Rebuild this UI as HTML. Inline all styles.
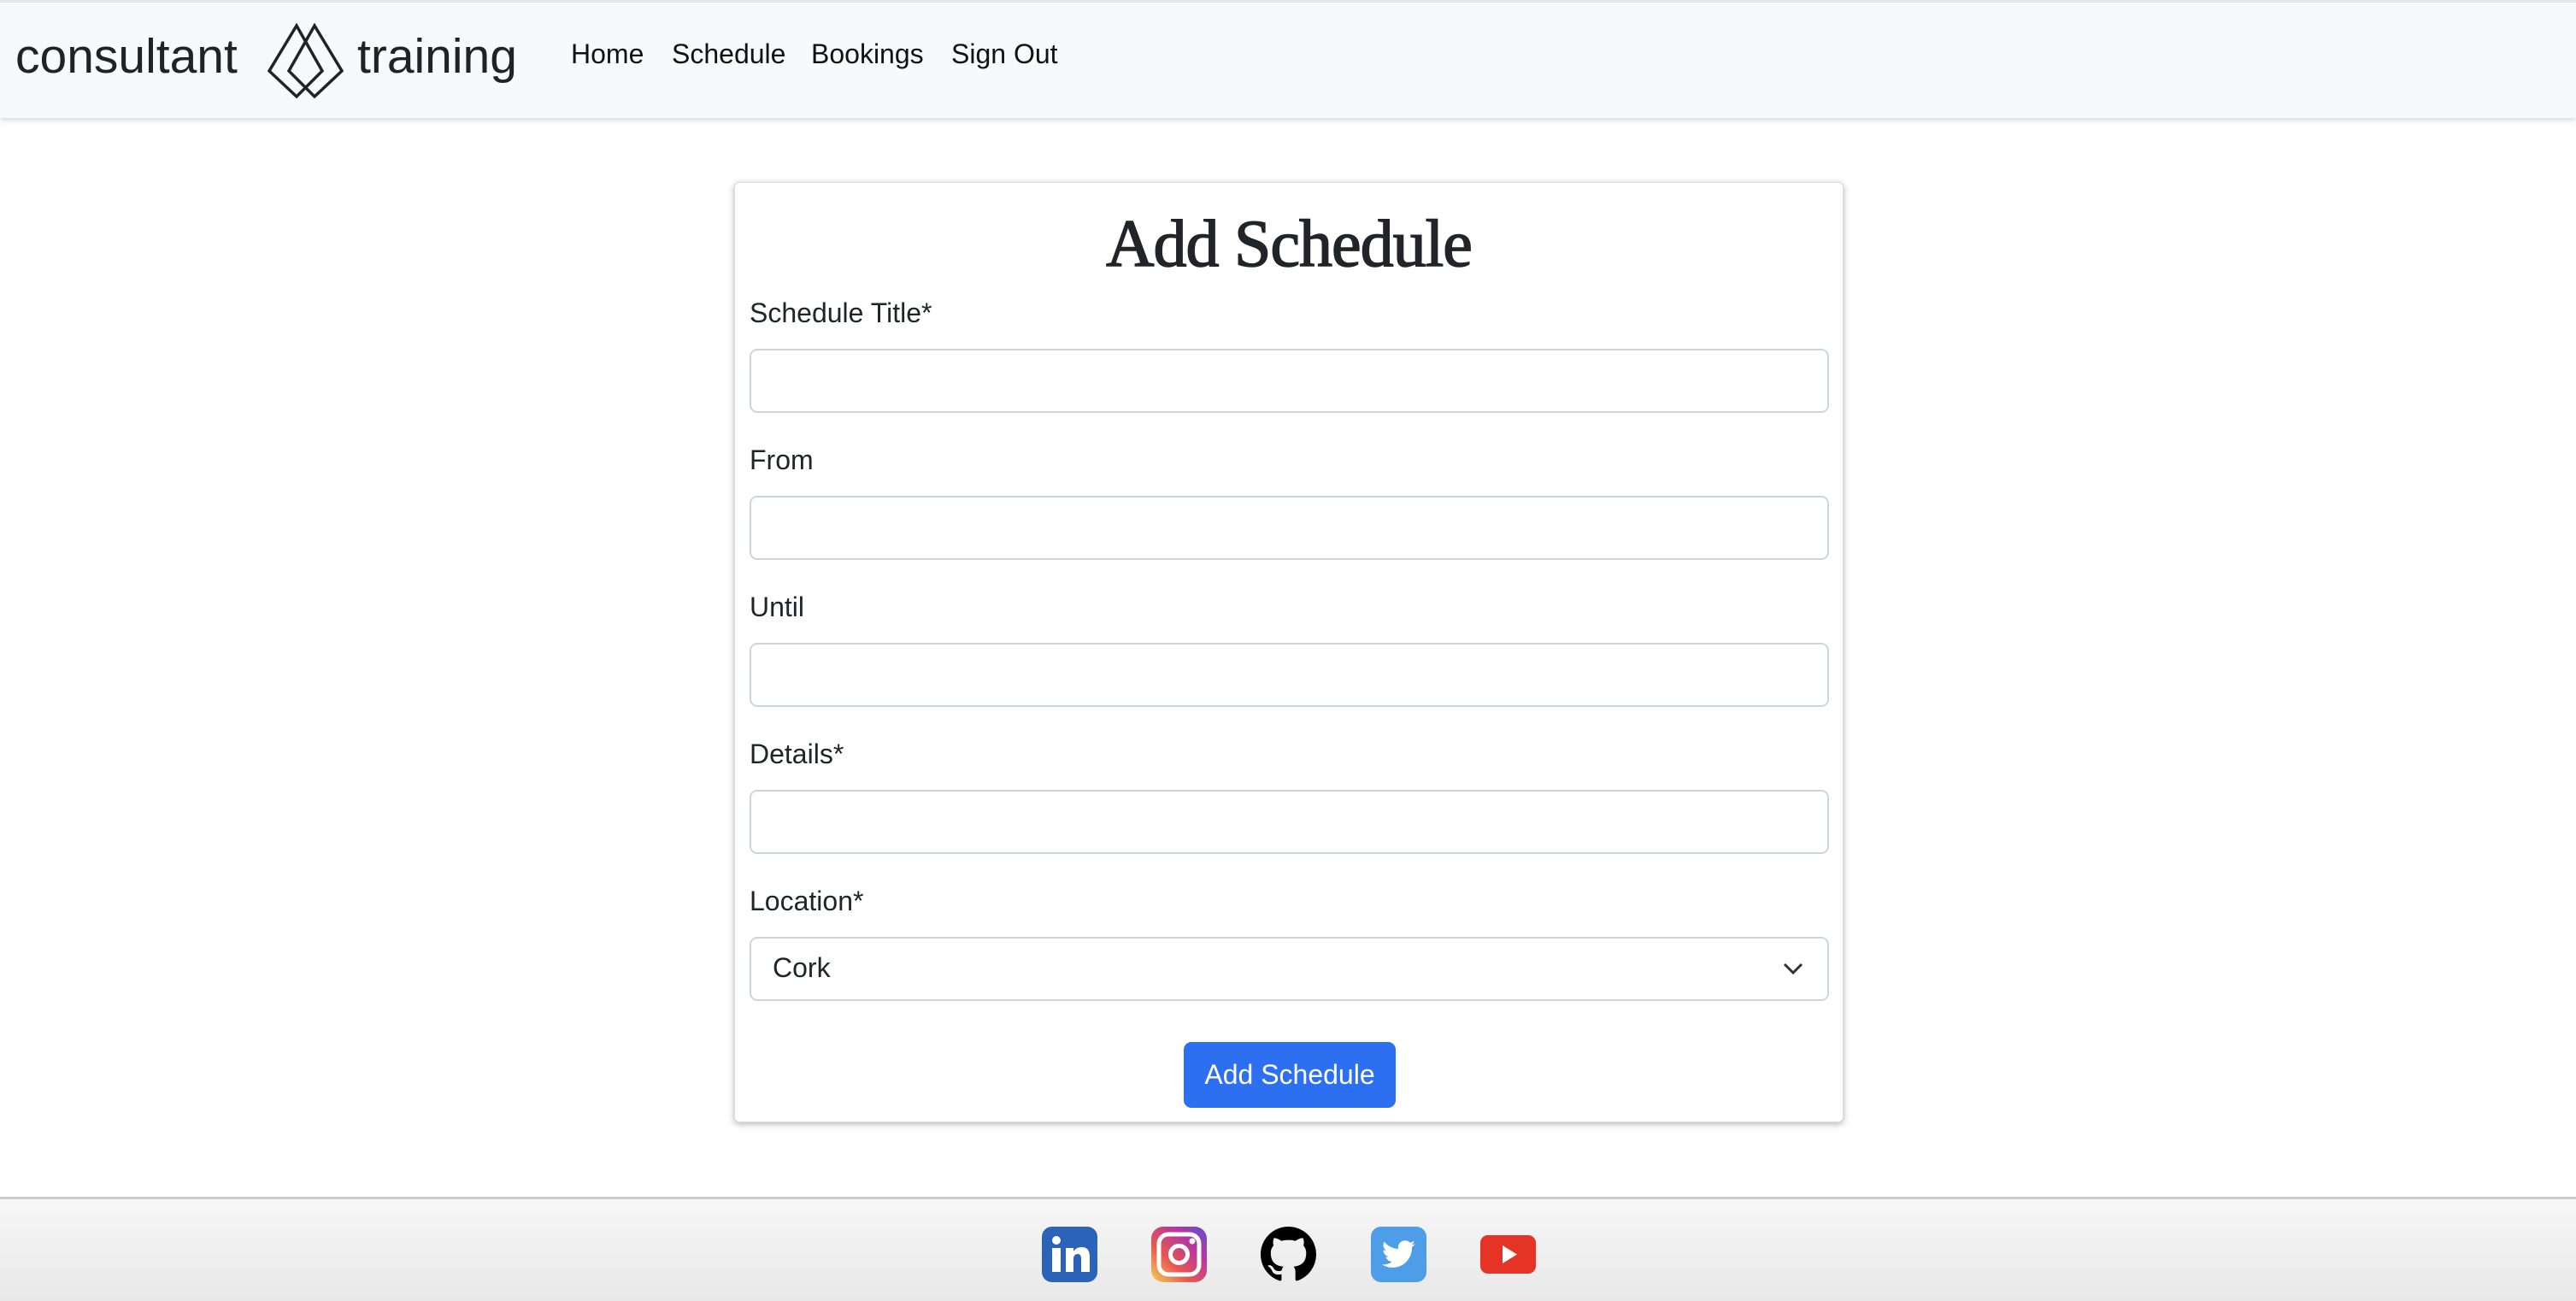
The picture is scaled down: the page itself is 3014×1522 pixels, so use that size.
<!DOCTYPE html>
<html><head><meta charset="utf-8"><style>
*{box-sizing:border-box;margin:0;padding:0}
body{width:3014px;height:1522px;background:#fff;font-family:"Liberation Sans",sans-serif;color:#212529;position:relative;overflow:hidden}
.nav{position:absolute;left:0;top:0;width:3014px;height:138px;background:#f8f9fa;border-top:3px solid #e3e5e6;box-shadow:0 3px 6px rgba(0,0,0,.15)}
.logo{position:absolute;top:30px;font-size:57px;font-family:"Liberation Sans",sans-serif;color:#222}
.nl{position:absolute;top:42px;font-size:32px;color:#111}
.card{position:absolute;left:859px;top:213px;width:1298px;height:1100px;border:1px solid #ddd;border-radius:6px;box-shadow:0 2px 8px rgba(0,0,0,.3);background:#fff}
h1{position:absolute;left:0;width:100%;top:26px;text-align:center;font-family:"Liberation Serif",serif;font-weight:normal;-webkit-text-stroke:1.5px #212529;font-size:78px;color:#212529;letter-spacing:-1px}
.lb{position:absolute;left:17px;font-size:32px}
.in{position:absolute;left:17px;width:1263px;height:75px;border:2px solid #ced4da;border-radius:9px}
.btn{position:absolute;left:525px;top:1005px;width:248px;height:77px;background:#2c6ff0;border-radius:9px;color:#fff;font-size:32px;text-align:center;line-height:77px}
.foot{position:absolute;left:0;top:1400px;width:3014px;height:122px;border-top:3px solid #ccc;background:linear-gradient(#f7f7f7,#e8e8e8)}
.ic{position:absolute;top:32px;width:65px;height:65px}
</style></head><body>
<div class="nav">
<div class="logo" style="left:18px">consultant</div>
<svg style="position:absolute;left:312px;top:24px" width="92" height="90" viewBox="0 0 92 90"><g fill="none" stroke="#222" stroke-width="3.5"><path d="M35 3 L3 56 L35 86 L65 56 Z"/><path d="M56 3 L88 56 L56 86 L26 56 Z"/></g></svg>
<div class="logo" style="left:418px">training</div>
<div class="nl" style="left:668px">Home</div>
<div class="nl" style="left:786px">Schedule</div>
<div class="nl" style="left:949px">Bookings</div>
<div class="nl" style="left:1113px">Sign Out</div>
</div>
<div class="card">
<h1>Add Schedule</h1>
<div class="lb" style="top:134px">Schedule Title*</div><div class="in" style="top:194px"></div>
<div class="lb" style="top:306px">From</div><div class="in" style="top:366px"></div>
<div class="lb" style="top:478px">Until</div><div class="in" style="top:538px"></div>
<div class="lb" style="top:650px">Details*</div><div class="in" style="top:710px"></div>
<div class="lb" style="top:822px">Location*</div><div class="in" style="top:882px"><span style="position:absolute;left:25px;top:16px;font-size:32px">Cork</span><svg style="position:absolute;right:28px;top:27px" width="24" height="16" viewBox="0 0 24 16"><path d="M2 3 L12 13 L22 3" fill="none" stroke="#333" stroke-width="3"/></svg></div>
<div class="btn">Add Schedule</div>
</div>
<div class="foot">
<svg class="ic" style="left:1219px" viewBox="0 0 65 65"><rect width="65" height="65" rx="12" fill="#2b63b8"/><circle cx="17" cy="16" r="5" fill="#fff"/><rect x="12" y="25" width="10" height="28" fill="#fff"/><path d="M28 25h9v4c2-3 5-5 10-5 7 0 9 5 9 12v17h-10v-15c0-4-1-6-4-6s-5 2-5 6v15h-9z" fill="#fff"/></svg>
<svg class="ic" style="left:1347px" viewBox="0 0 65 65"><defs><linearGradient id="g" x1="0" y1="1" x2="1" y2="0"><stop offset="0" stop-color="#f5d25a"/><stop offset=".35" stop-color="#e9574f"/><stop offset=".7" stop-color="#b7369f"/><stop offset="1" stop-color="#5a50d5"/></linearGradient></defs><rect width="65" height="65" rx="14" fill="url(#g)"/><rect x="9" y="9" width="47" height="47" rx="11" fill="none" stroke="#fff" stroke-width="5"/><circle cx="32.5" cy="32.5" r="10" fill="none" stroke="#fff" stroke-width="5"/><circle cx="48" cy="17" r="3.5" fill="#fff"/></svg>
<svg class="ic" style="left:1475px" viewBox="0 0 16 16"><path fill="#000" d="M8 0C3.58 0 0 3.58 0 8c0 3.54 2.290 6.530 5.470 7.590.4.07.55-.17.55-.38 0-.19-.01-.82-.01-1.490-2.010.37-2.530-.49-2.690-.94-.09-.23-.48-.94-.82-1.130-.28-.15-.68-.52-.01-.53.63-.01 1.080.58 1.230.82.72 1.210 1.870.87 2.330.66.07-.52.28-.87.51-1.070-1.780-.2-3.640-.89-3.640-3.950 0-.87.31-1.590.82-2.150-.08-.2-.36-1.020.08-2.120 0 0 .67-.21 2.200.82.64-.18 1.320-.27 2-.27.68 0 1.360.09 2 .27 1.530-1.040 2.200-.82 2.200-.82.44 1.100.16 1.920.08 2.120.51.56.82 1.270.82 2.150 0 3.070-1.870 3.750-3.650 3.950.29.25.54.73.54 1.480 0 1.070-.01 1.930-.01 2.200 0 .21.15.46.55.38A8.013 8.013 0 0016 8c0-4.420-3.580-8-8-8z"/></svg>
<svg class="ic" style="left:1604px" viewBox="0 0 65 65"><rect width="65" height="65" rx="12" fill="#4d9de8"/><path fill="#fff" d="M52 20c-1.5.7-3 1-4.6 1.2 1.7-1 2.900-2.600 3.500-4.400-1.6.9-3.300 1.600-5.100 1.900-1.500-1.600-3.600-2.500-5.900-2.500-4.400 0-8 3.600-8 8 0 .6.1 1.200.2 1.800-6.700-.3-12.600-3.500-16.500-8.400-.7 1.200-1.100 2.600-1.100 4 0 2.800 1.400 5.200 3.600 6.700-1.300 0-2.600-.4-3.600-1v.1c0 3.900 2.800 7.100 6.400 7.800-.7.2-1.400.3-2.100.3-.5 0-1 0-1.500-.1 1 3.200 4 5.500 7.500 5.600-2.700 2.100-6.200 3.400-10 3.400-.6 0-1.300 0-1.900-.1 3.600 2.300 7.800 3.600 12.300 3.600 14.800 0 22.800-12.300 22.800-22.900v-1c1.500-1.100 2.900-2.500 4-4.100z"/></svg>
<svg class="ic" style="left:1732px" viewBox="0 0 65 65"><rect x="0" y="10" width="65" height="45" rx="9" fill="#e53325"/><path d="M26 22 L43 32.5 L26 43 Z" fill="#fff"/></svg>
</div>
</body></html>
